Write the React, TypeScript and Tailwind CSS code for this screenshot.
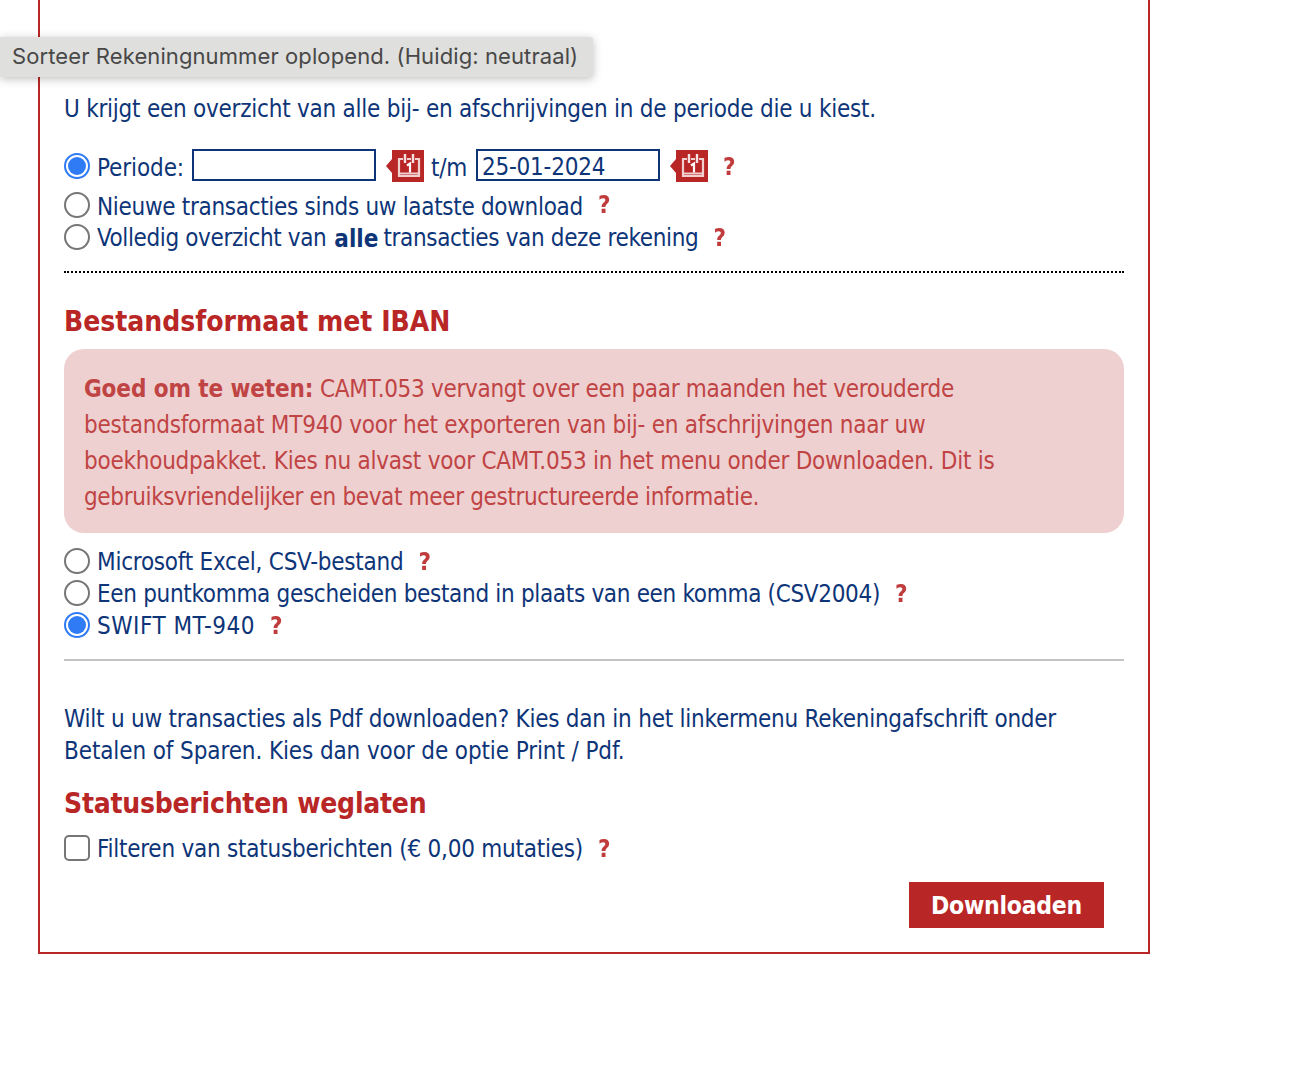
import React from "react";

const CalendarButton = () => (
  <svg width="38" height="32" viewBox="0 0 38 32" className="shrink-0">
    <path d="M0 16 L6 9 V0 H38 V32 H6 V23 Z" fill="#b92626" />
    <path d="M17 9 H13 V26 H33 V9 H29 M21 9 H25" fill="none" stroke="#f0cfcf" strokeWidth="2.2" />
    <path d="M13 23.5 H33" fill="none" stroke="#f0cfcf" strokeWidth="2" />
    <path d="M19 4 V13 M27 4 V13" fill="none" stroke="#f6e2e2" strokeWidth="2.4" />
    <path d="M21 15.5 L24 13.5 V22.5" fill="none" stroke="#fff" strokeWidth="2.2" />
  </svg>
);

const Help = ({ className = "" }: { className?: string }) => (
  <span className={`text-[24px] leading-none font-bold text-[#b92626]/90 blur-[0.5px] ${className}`}>?</span>
);

const Radio = ({ checked = false }: { checked?: boolean }) => (
  <span
    className={`mr-[7px] flex h-[26px] w-[26px] shrink-0 -translate-y-px items-center justify-center rounded-full border-2 bg-white ${
      checked ? "border-[#2f7bf6]" : "border-[#767676]"
    }`}
  >
    {checked && <span className="h-[18px] w-[18px] rounded-full bg-[#2f7bf6]" />}
  </span>
);

const Row = ({ children, className = "" }: { children: React.ReactNode; className?: string }) => (
  <div className={`flex h-8 items-center whitespace-nowrap ${className}`}>{children}</div>
);

export default function App() {
  return (
    <div
      className="h-[1076px] overflow-hidden bg-white pl-[38px] text-[24px] leading-8 tracking-[-0.24px] text-[#0e3578]"
      style={{ fontFamily: '"DejaVu Sans", sans-serif', fontStretch: "condensed" }}
    >
      {/* Tooltip over the panel */}
      <div className="absolute top-[37px] left-0 flex h-10 w-[593px] items-center rounded-r-[3px] bg-[#dfdfdd] pb-0.5 pl-3 font-['Inter',sans-serif] text-[22px] tracking-[0.1px] text-[#484848] shadow-[0_2px_10px_rgba(0,0,0,0.25)]">
        Sorteer Rekeningnummer oplopend. (Huidig: neutraal)
      </div>

      <div className="h-[954px] w-[1112px] border-x-2 border-b-2 border-[#b92626] px-6 pt-[93px]">
        <p className="h-8">U krijgt een overzicht van alle bij- en afschrijvingen in de periode die u kiest.</p>

        <Row className="mt-[26px]">
          <Radio checked />
          <span className="translate-y-px tracking-[-0.1px]">Periode:</span>
          <span className="ml-2 h-8 w-[184px] -translate-y-0.5 border-2 border-[#0e3578]" />
          <span className="ml-[10px] -translate-y-px"><CalendarButton /></span>
          <span className="ml-[7px] translate-y-px">t/m</span>
          <span className="ml-[9px] flex h-8 w-[184px] -translate-y-0.5 items-center border-2 border-[#0e3578] pt-1 pl-1">25-01-2024</span>
          <span className="ml-[10px] -translate-y-px"><CalendarButton /></span>
          <Help className="ml-[15px]" />
        </Row>
        <Row className="mt-[7px]">
          <Radio />
          <span className="translate-y-px tracking-[-0.31px]">Nieuwe transacties sinds uw laatste download</span>
          <Help className="ml-[15px] -translate-y-[1px]" />
        </Row>
        <Row className="-mt-px translate-y-px">
          <Radio />
          <span className="tracking-[-0.38px]">Volledig overzicht van</span>
          <b className="mr-[5px] ml-2 translate-y-[1px] font-bold tracking-normal">alle</b>
          <span className="tracking-[-0.35px]">transacties van deze rekening</span>
          <Help className="ml-[15px]" />
        </Row>

        <div className="mt-[18px] border-t-2 border-dotted border-black" />

        <h2 className="mt-[33px] h-8 text-[28px] leading-8 font-bold tracking-normal text-[#b92626]">Bestandsformaat met IBAN</h2>

        <div className="mt-[11px] rounded-[20px] bg-[#eed0d1] px-5 pt-[22px] pb-[18px] leading-9 text-[#c04444]">
          <b className="font-bold tracking-[-0.1px]">Goed om te weten:</b>{" "}
          <span className="tracking-[-0.3px]">CAMT.053 vervangt over een paar maanden het verouderde</span>
          <br />
          bestandsformaat MT940 voor het exporteren van bij- en afschrijvingen naar uw
          <br />
          boekhoudpakket. Kies nu alvast voor CAMT.053 in het menu onder Downloaden. Dit is
          <br />
          <span className="tracking-[-0.35px]">gebruiksvriendelijker en bevat meer gestructureerde informatie.</span>
        </div>

        <Row className="mt-[13px]">
          <Radio />
          <span>Microsoft Excel, CSV-bestand</span>
          <Help className="ml-[15px]" />
        </Row>
        <Row>
          <Radio />
          <span className="tracking-[-0.32px]">Een puntkomma gescheiden bestand in plaats van een komma (CSV2004)</span>
          <Help className="ml-[15px]" />
        </Row>
        <Row>
          <Radio checked />
          <span className="tracking-[0.5px]">SWIFT MT-940</span>
          <Help className="ml-[15px]" />
        </Row>

        <div className="mt-[17px] h-0.5 bg-[#c4c4c4]" />

        <p className="mt-[42px]">
          Wilt u uw transacties als Pdf downloaden? Kies dan in het linkermenu Rekeningafschrift onder
          <br />
          <span className="tracking-[-0.11px]">Betalen of Sparen. Kies dan voor de optie Print / Pdf.</span>
        </p>

        <h2 className="mt-[21px] h-8 text-[28px] leading-8 font-bold text-[#b92626]">Statusberichten weglaten</h2>

        <Row className="mt-[13px]">
          <span className="mr-[7px] h-[26px] w-[26px] shrink-0 -translate-y-px rounded-[5px] border-2 border-[#767676]" />
          <span>Filteren van statusberichten (€ 0,00 mutaties)</span>
          <Help className="ml-[15px]" />
        </Row>

        <div className="mt-[17px] flex justify-end pr-5">
          <button className="h-[46px] w-[195px] bg-[#b92626] pt-0.5 text-[24.5px] font-bold text-white">Downloaden</button>
        </div>
      </div>
    </div>
  );
}
